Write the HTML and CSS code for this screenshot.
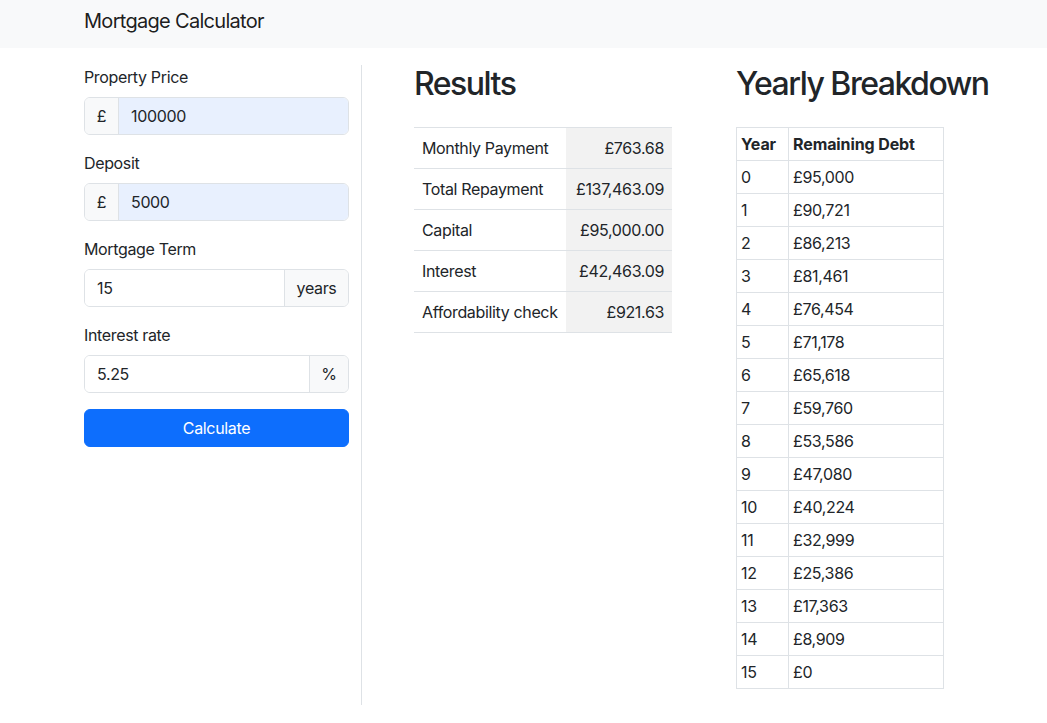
FILE: index.html
```html
<!DOCTYPE html>
<html lang="en">
<head>
<meta charset="utf-8">
<title>Mortgage Calculator</title>
<link rel="stylesheet" href="styles.css">
</head>
<body>
<nav class="navbar"><span class="brand">Mortgage Calculator</span></nav>
<main class="layout">
  <section class="form-col">
    <div class="field">
      <label class="label" for="price">Property Price</label>
      <div class="input-group">
        <span class="addon addon-left">£</span>
        <input class="input autofill" id="price" type="text" value="100000">
      </div>
    </div>
    <div class="field">
      <label class="label" for="deposit">Deposit</label>
      <div class="input-group">
        <span class="addon addon-left">£</span>
        <input class="input autofill" id="deposit" type="text" value="5000">
      </div>
    </div>
    <div class="field">
      <label class="label" for="term">Mortgage Term</label>
      <div class="input-group">
        <input class="input" id="term" type="text" value="15">
        <span class="addon addon-right addon-years">years</span>
      </div>
    </div>
    <div class="field">
      <label class="label" for="rate">Interest rate</label>
      <div class="input-group">
        <input class="input" id="rate" type="text" value="5.25">
        <span class="addon addon-right addon-pct">%</span>
      </div>
    </div>
    <button class="btn-primary" type="button">Calculate</button>
  </section>

  <section class="results-col">
    <h2 class="heading">Results</h2>
    <table class="results">
      <tbody>
        <tr><td class="r-label">Monthly Payment</td><td class="r-value">£763.68</td></tr>
        <tr><td class="r-label">Total Repayment</td><td class="r-value">£137,463.09</td></tr>
        <tr><td class="r-label">Capital</td><td class="r-value">£95,000.00</td></tr>
        <tr><td class="r-label">Interest</td><td class="r-value">£42,463.09</td></tr>
        <tr><td class="r-label">Affordability check</td><td class="r-value">£921.63</td></tr>
      </tbody>
    </table>
  </section>

  <section class="yearly-col">
    <h2 class="heading">Yearly Breakdown</h2>
    <table class="yearly">
      <thead>
        <tr><th class="y-year">Year</th><th class="y-debt">Remaining Debt</th></tr>
      </thead>
      <tbody>
        <tr><td>0</td><td>£95,000</td></tr>
        <tr><td>1</td><td>£90,721</td></tr>
        <tr><td>2</td><td>£86,213</td></tr>
        <tr><td>3</td><td>£81,461</td></tr>
        <tr><td>4</td><td>£76,454</td></tr>
        <tr><td>5</td><td>£71,178</td></tr>
        <tr><td>6</td><td>£65,618</td></tr>
        <tr><td>7</td><td>£59,760</td></tr>
        <tr><td>8</td><td>£53,586</td></tr>
        <tr><td>9</td><td>£47,080</td></tr>
        <tr><td>10</td><td>£40,224</td></tr>
        <tr><td>11</td><td>£32,999</td></tr>
        <tr><td>12</td><td>£25,386</td></tr>
        <tr><td>13</td><td>£17,363</td></tr>
        <tr><td>14</td><td>£8,909</td></tr>
        <tr><td>15</td><td>£0</td></tr>
      </tbody>
    </table>
  </section>
</main>
</body>
</html>
```
FILE: styles.css
```css
* { box-sizing: border-box; }

html, body {
  margin: 0;
  padding: 0;
  background: #fff;
}

body {
  font-family: Inter, "Noto Sans", "Liberation Sans", sans-serif;
  font-size: 16px;
  line-height: 24px;
  letter-spacing: -0.35px;
  color: #212529;
}

.navbar {
  height: 48px;
  background: #f8f9fa;
  padding: 6px 0 0 84px;
}

.brand {
  display: block;
  font-size: 20px;
  line-height: 30px;
  letter-spacing: -0.7px;
  color: rgba(0, 0, 0, 0.9);
}

.layout {
  display: flex;
  align-items: stretch;
  padding-left: 84px;
  margin-top: 17px;
}

.form-col {
  flex: none;
  width: 278px;
  padding-right: 12px;
  border-right: 1px solid #dee2e6;
}

.field {
  margin-bottom: 16px;
}

.label {
  display: block;
  margin-bottom: 8px;
}

.input-group {
  display: flex;
  height: 38px;
  border: 1px solid #dee2e6;
  border-radius: 6px;
  overflow: hidden;
}

.addon {
  flex: none;
  display: flex;
  align-items: center;
  justify-content: center;
  background: #f8f9fa;
  color: #212529;
}

.addon-left {
  width: 34px;
  border-right: 1px solid #dee2e6;
}

.addon-right {
  border-left: 1px solid #dee2e6;
}

.addon-years { width: 64px; }
.addon-pct { width: 39px; }

.input {
  flex: 1;
  min-width: 0;
  border: 0;
  outline: none;
  margin: 0;
  padding: 0 12px;
  font: inherit;
  letter-spacing: inherit;
  color: #212529;
  background: #fff;
}

.input.autofill {
  background: #e8f0fe;
}

.btn-primary {
  display: block;
  width: 265px;
  height: 38px;
  margin: 0;
  border: 1px solid #0d6efd;
  border-radius: 6px;
  background: #0d6efd;
  color: #fff;
  font: inherit;
  letter-spacing: inherit;
  cursor: pointer;
}

.heading {
  margin: 0 0 24px;
  font-size: 32px;
  line-height: 38px;
  font-weight: 500;
  letter-spacing: -1.5px;
  color: #212529;
}

.results-col {
  flex: none;
  width: 258px;
  margin-left: 52px;
}

.results {
  width: 258px;
  border-collapse: collapse;
  border-top: 1px solid #dee2e6;
  table-layout: fixed;
}

.results td {
  padding: 8px;
  border-bottom: 1px solid #dee2e6;
  white-space: nowrap;
}

.r-label { width: 152px; }

.r-value {
  width: 106px;
  text-align: right;
  background: #f2f2f2;
}

.yearly-col {
  flex: none;
  margin-left: 64px;
}

.yearly {
  width: 207px;
  border-collapse: collapse;
  table-layout: fixed;
  margin-bottom: 16px;
}

.yearly th,
.yearly td {
  padding: 4px;
  border: 1px solid #dee2e6;
  text-align: left;
  white-space: nowrap;
}

.yearly th {
  font-weight: 700;
  letter-spacing: -0.1px;
}

.y-year { width: 52px; }
.y-debt { width: 155px; }
```
